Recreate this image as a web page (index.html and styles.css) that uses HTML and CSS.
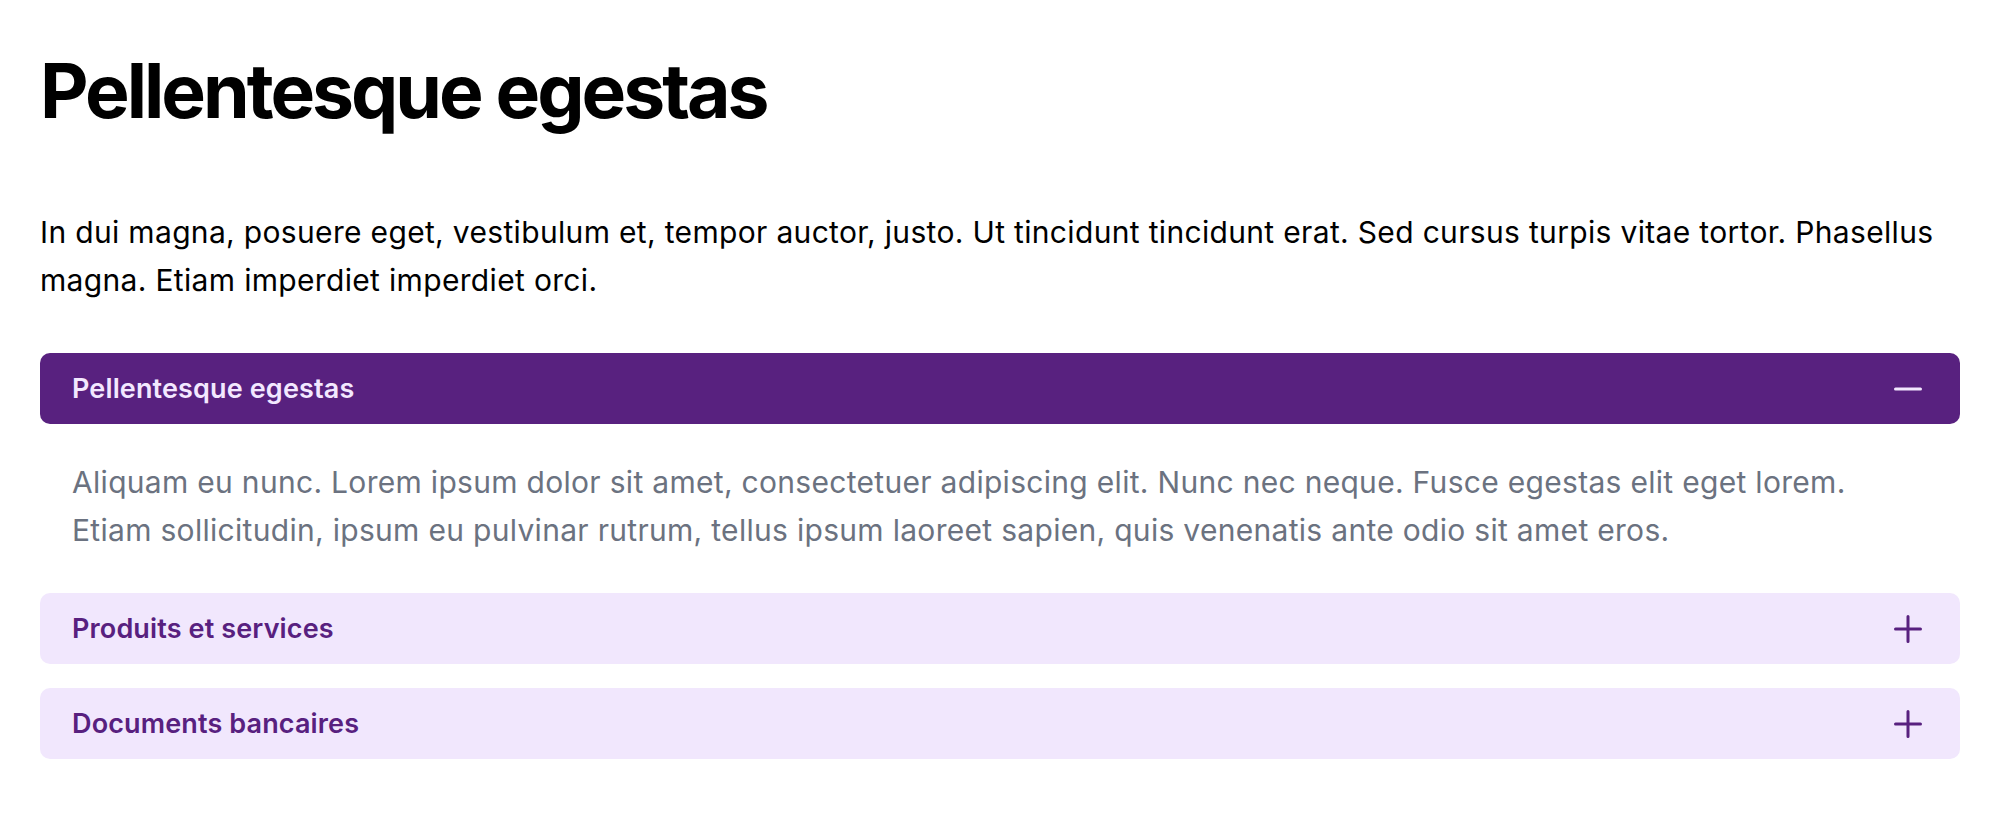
FILE: index.html
```html
<!DOCTYPE html>
<html lang="fr">
<head>
<meta charset="utf-8">
<title>Pellentesque egestas</title>
<link rel="stylesheet" href="styles.css">
</head>
<body>
<main class="page">
  <h1 class="title">Pellentesque egestas</h1>
  <p class="intro">In dui magna, posuere eget, vestibulum et, tempor auctor, justo. Ut tincidunt tincidunt erat. Sed cursus turpis vitae tortor. Phasellus magna. Etiam imperdiet imperdiet orci.</p>
  <div class="accordion">
    <div class="item item-open">
      <button class="trigger trigger-open" type="button">
        <span class="label">Pellentesque egestas</span>
        <svg class="icon" width="28" height="28" viewBox="0 0 28 28" aria-hidden="true"><path d="M1.5 14H26.5" fill="none" stroke="currentColor" stroke-width="3" stroke-linecap="round"/></svg>
      </button>
      <div class="panel">Aliquam eu nunc. Lorem ipsum dolor sit amet, consectetuer adipiscing elit. Nunc nec neque. Fusce egestas elit eget lorem. Etiam sollicitudin, ipsum eu pulvinar rutrum, tellus ipsum laoreet sapien, quis venenatis ante odio sit amet eros.</div>
    </div>
    <div class="item">
      <button class="trigger" type="button">
        <span class="label">Produits et services</span>
        <svg class="icon" width="28" height="28" viewBox="0 0 28 28" aria-hidden="true"><path d="M1.5 14H26.5M14 1.5V26.5" fill="none" stroke="currentColor" stroke-width="3" stroke-linecap="round"/></svg>
      </button>
    </div>
    <div class="item">
      <button class="trigger" type="button">
        <span class="label">Documents bancaires</span>
        <svg class="icon" width="28" height="28" viewBox="0 0 28 28" aria-hidden="true"><path d="M1.5 14H26.5M14 1.5V26.5" fill="none" stroke="currentColor" stroke-width="3" stroke-linecap="round"/></svg>
      </button>
    </div>
  </div>
</main>
</body>
</html>
```

FILE: styles.css
```css
* {
  box-sizing: border-box;
}

html, body {
  margin: 0;
  padding: 0;
  background: #ffffff;
}

body {
  font-family: Inter, "Noto Sans", "Liberation Sans", sans-serif;
  color: #000000;
}

.page {
  width: 1920px;
  margin-left: 40px;
  padding-top: 46px;
}

.title {
  margin: 0;
  font-size: 75px;
  line-height: 90px;
  font-weight: 700;
  letter-spacing: -0.04em;
  color: #000000;
}

.intro {
  margin: 73px 0 0;
  font-size: 30px;
  line-height: 47.5px;
  font-weight: 400;
  letter-spacing: 0.011em;
}

.accordion {
  margin-top: 49px;
  display: flex;
  flex-direction: column;
  gap: 24px;
}

.trigger {
  display: flex;
  align-items: center;
  justify-content: space-between;
  width: 100%;
  height: 71px;
  padding: 0 38px 0 32px;
  border: 0;
  border-radius: 10px;
  background: #f1e7fd;
  color: #58207f;
  font-family: inherit;
  font-size: 27px;
  font-weight: 600;
  letter-spacing: 0.005em;
  text-align: left;
  cursor: pointer;
}

.trigger-open {
  background: #58217f;
  color: #f3e8ff;
}

.icon {
  display: block;
  flex: none;
}

.panel {
  padding: 35px 80px 15px 32px;
  font-size: 30px;
  line-height: 47.5px;
  letter-spacing: 0.01em;
  color: #6b7280;
}
```
